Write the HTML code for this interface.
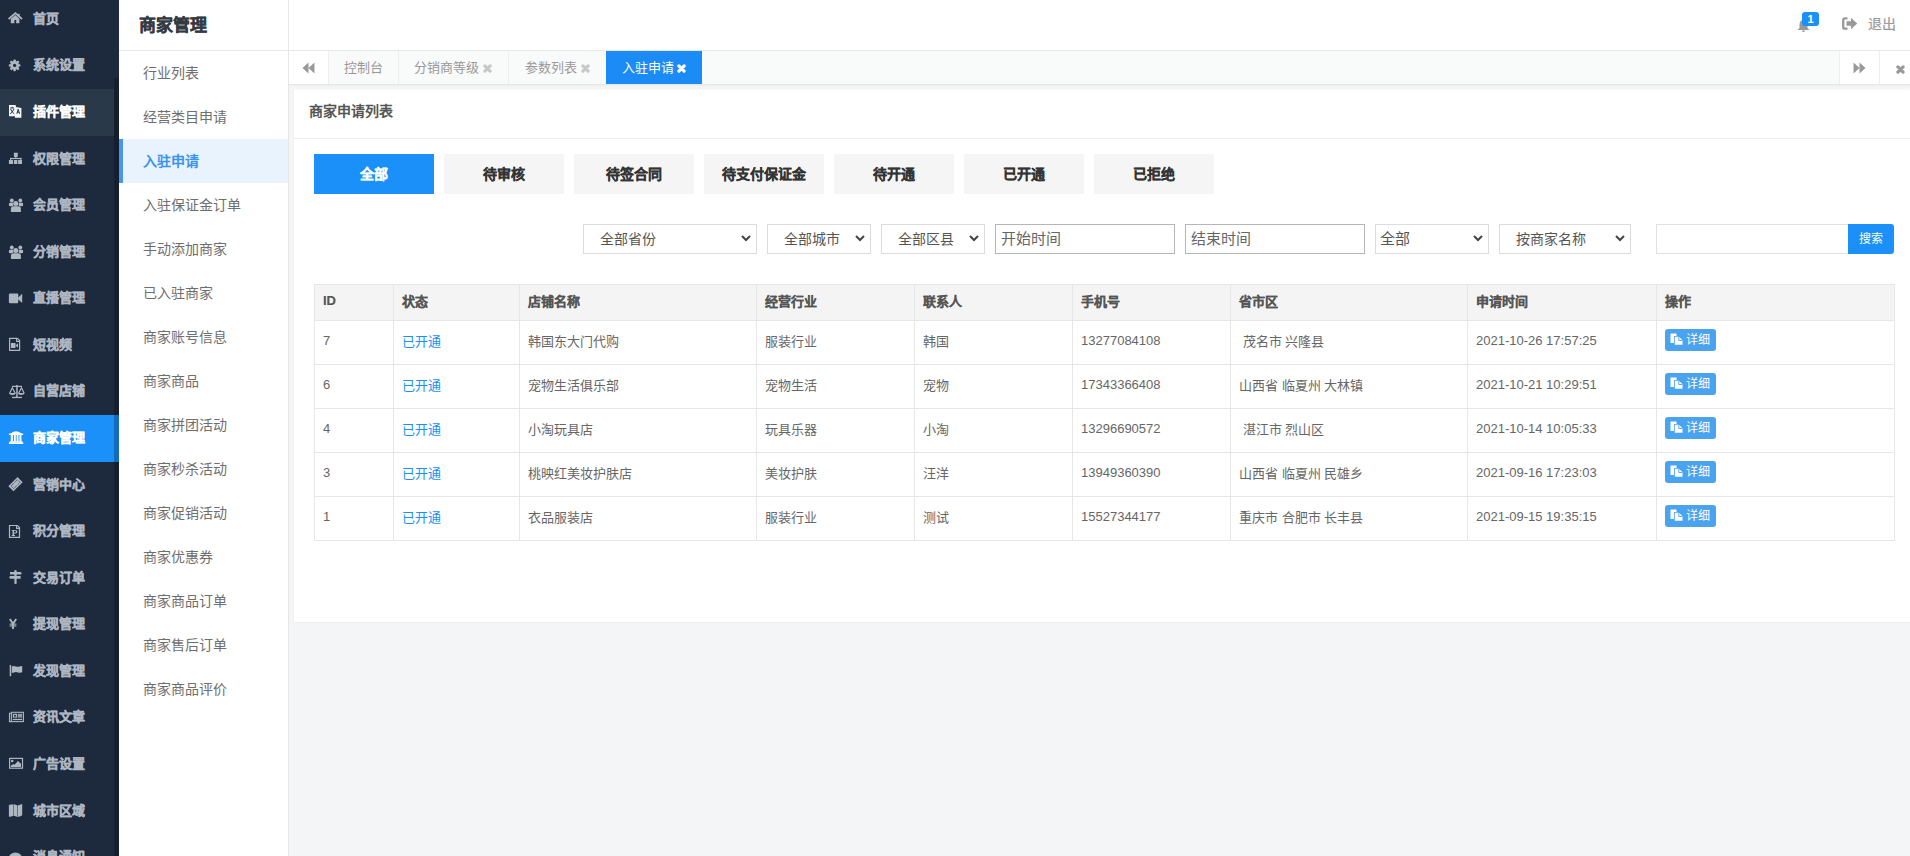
<!DOCTYPE html>
<html lang="zh-CN">
<head>
<meta charset="utf-8">
<style>
*{box-sizing:border-box;margin:0;padding:0}
html,body{width:1910px;height:856px;overflow:hidden}
body{font-family:"Liberation Sans",sans-serif;background:#f4f5f7;position:relative;color:#666}
.abs{position:absolute}
#side{left:0;top:0;width:119px;height:856px;background:#1d2a3e;overflow:hidden}
#side .strip{position:absolute;left:114px;top:78px;width:5px;height:800px;background:rgba(0,0,0,0.25)}
#side .it{position:absolute;left:0;width:114px;height:47px;font-size:13px;font-weight:bold;color:#aeb6c2;line-height:47px}
#side .it span{position:absolute;left:33px;top:0;line-height:45px;-webkit-text-stroke:0.3px currentColor}
#side .ic{position:absolute;left:5px;width:20px;height:20px;display:block}
#side .ic svg{display:block}
#side .hov{background:#2a3949;color:#fff}
#side .act{background:#1a90f8;color:#fff;width:119px}
#sub{left:119px;top:0;width:170px;height:856px;background:#fff;border-right:1px solid #e6e6e6}
#sub .ttl{position:absolute;left:20px;top:2px;height:50px;line-height:48px;font-size:17px;font-weight:bold;color:#333a42;-webkit-text-stroke:0.3px #333a42}
#sub .line{position:absolute;left:0;top:50px;width:169px;height:1px;background:#e8e8e8}
#sub .si{position:absolute;left:0;width:169px;height:44px;line-height:44px;font-size:14px;color:#6e6e6e;padding-left:24px}
#sub .si.on{background:#e9f3fd;color:#3b93ee;font-weight:bold;border-left:4px solid #4596ee;padding-left:20px}
#hdr{left:289px;top:0;width:1621px;height:51px;background:#fff;border-bottom:1px solid #e8e8e8}
#hdr .bell{position:absolute;left:1508px;top:18px}
#hdr .badge{position:absolute;left:1513px;top:12px;width:17px;height:14px;border-radius:3px;background:#1a90f8;color:#fff;font-size:11px;font-weight:bold;text-align:center;line-height:14px}
#hdr .signout{position:absolute;left:1553px;top:16px}
#hdr .logout{position:absolute;left:1579px;top:0;line-height:48px;font-size:14px;color:#999;-webkit-text-stroke:0.2px #999}
#tabs{left:289px;top:51px;width:1621px;height:34px;background:#f9fafa;border-bottom:1px solid #e6e6e6}
.tab{position:absolute;top:0;height:33px;line-height:33px;font-size:13px;color:#999;border-left:1px solid #eee;text-align:center;white-space:nowrap}
.tab svg{vertical-align:-1px}
.tab.on{background:#1b8cf5;color:#fff;border-left:none}
.tbtn{position:absolute;top:0;height:33px;background:#fff;display:flex;align-items:center;justify-content:center}
.tbtn.r1{left:1550px;width:40px;border-left:1px solid #eee}
.tbtn.r2{left:1590px;width:31px;border-left:1px solid #eee;justify-content:flex-start;padding-left:16px;padding-top:3px}
#gap{left:289px;top:85px;width:1621px;height:5px;background:linear-gradient(#eff0f0,#f7f8f8)}
#panel{left:294px;top:90px;width:1616px;height:532px;background:#fff;box-shadow:0 1px 1px rgba(0,0,0,0.03)}
.ptitle{position:absolute;left:15px;top:0;height:48px;line-height:42px;font-size:14px;font-weight:bold;color:#555}
.pline{position:absolute;left:0;top:48px;width:1616px;height:1px;background:#ececec}
.sbtn{position:absolute;top:64px;width:120px;height:40px;line-height:40px;text-align:center;font-size:14px;font-weight:bold;color:#333;background:#f5f5f5;-webkit-text-stroke:0.2px currentColor}
.sbtn.on{background:#1a90f8;color:#fff}
.sel{position:absolute;top:134px;height:30px;border:1px solid #dcdcdc;background:#fff;font-size:14px;color:#555}
.sel span{position:absolute;top:0;line-height:28px;white-space:nowrap}
.sel i{position:absolute;right:5px;top:10px;display:block;height:7px}
.sel i svg{display:block}
.sel.big{font-size:15px}
.inp{position:absolute;top:134px;height:30px;border:1px solid #b5b5b5;background:#fff;font-size:15px;color:#666}
.inp span{position:absolute;left:5px;top:0;line-height:28px}
.sinp{position:absolute;top:134px;height:30px;border:1px solid #e0e0e0;background:#fff}
.sbtn2{position:absolute;top:134px;width:46px;height:30px;line-height:30px;text-align:center;font-size:12px;color:#fff;background:#1a90f8;border-radius:0 3px 3px 0}
.tbl{position:absolute;left:20px;top:194px;border-collapse:collapse;table-layout:fixed;width:1580px}
.tbl td{border:1px solid #e6e6e6;padding:0 0 4px 8px;font-size:13px;color:#666;white-space:nowrap;overflow:hidden}
.tbl tr.th td{height:36px;padding-bottom:5px;background:#f4f4f4;font-weight:bold;color:#555;-webkit-text-stroke:0.15px #555}
.tbl tr.tr td{height:44px}
.tbl td.blue{color:#1a90f8}
.dbtn{display:inline-block;width:51px;height:22px;line-height:22px;border-radius:3px;background:#4aa3ef;color:#fff;font-size:12px;padding-left:5px;position:relative;top:-1px}
.dbtn svg{vertical-align:-1px}
.dbtn b{font-weight:normal;margin-left:3px}

</style>
</head>
<body>
<div id="side" class="abs"><div class="it" style="top:-4.14px"><span>首页</span></div><i class="ic" style="top:8px;color:#aeb6c2"><svg width="20" height="20" viewBox="0 0 20 20" ><path d="M3.6 11 L10.4 5.2 L17 11" fill="none" stroke="currentColor" stroke-width="1.7" stroke-linejoin="miter"/><rect x="13" y="5.8" width="1.6" height="3.2" fill="currentColor"/><path d="M5.8 10.8 L10.4 7 L14.4 10.8 L14.4 15.2 L11.2 15.2 L11.2 12 L9.4 12 L9.4 15.2 L5.8 15.2 Z" fill="currentColor"/></svg></i><div class="it" style="top:42.43px"><span>系统设置</span></div><i class="ic" style="top:55px;color:#aeb6c2"><svg width="20" height="20" viewBox="0 0 20 20" ><g fill="currentColor"><circle cx="9.6" cy="10.4" r="4.4"/><g id="t"><rect x="8.4" y="4.6" width="2.4" height="11.6" rx="0.6"/></g><rect x="8.4" y="4.6" width="2.4" height="11.6" rx="0.6" transform="rotate(45 9.6 10.4)"/><rect x="8.4" y="4.6" width="2.4" height="11.6" rx="0.6" transform="rotate(90 9.6 10.4)"/><rect x="8.4" y="4.6" width="2.4" height="11.6" rx="0.6" transform="rotate(135 9.6 10.4)"/></g><circle cx="9.6" cy="10.4" r="1.6" fill="#1d2a3e"/></svg></i><div class="it hov" style="top:89.00px"><span>插件管理</span></div><i class="ic" style="top:101px;color:#fff"><svg width="20" height="20" viewBox="0 0 20 20" ><path d="M4 4 L10.5 4 L11 6 L16.4 7 L16.4 16.8 L10 16.8 L9.5 15.2 L4 15.2 Z" fill="#f4f6f8"/><path d="M4.3 4.2 L10.2 4.2 L10.2 15 L4.3 15 Z" fill="#f4f6f8"/><g stroke="#2a3949" fill="none" stroke-width="1"><path d="M5.2 7 L9.2 7"/><path d="M7.2 5.8 L7.2 7"/><path d="M5.6 8 Q7 11.5 9.2 12.8"/><path d="M9 8 Q7.5 11.5 5.2 12.8"/><path d="M11.8 12.8 L13.2 8.2 L14.6 12.8"/><path d="M12.3 11.3 L14.1 11.3"/><path d="M10 15.6 L8.3 17"/></g></svg></i><div class="it" style="top:135.57px"><span>权限管理</span></div><i class="ic" style="top:148px;color:#aeb6c2"><svg width="20" height="20" viewBox="0 0 20 20" ><g fill="currentColor"><path d="M8.8 4.7 L12.9 4.7 L12.6 9.1 L9.1 9.1 Z"/><rect x="10.3" y="9" width="1" height="1.5"/><rect x="5.1" y="9.9" width="11.3" height="1.2"/><rect x="5.1" y="9.9" width="1.1" height="2.2"/><rect x="15.3" y="9.9" width="1.1" height="2.2"/><rect x="3.9" y="11.9" width="4.1" height="4.2" rx="0.4"/><rect x="8.9" y="11.9" width="3.5" height="4.2" rx="0.4"/><rect x="13.1" y="11.9" width="3.9" height="4.2" rx="0.4"/></g></svg></i><div class="it" style="top:182.14px"><span>会员管理</span></div><i class="ic" style="top:195px;color:#aeb6c2"><svg width="20" height="20" viewBox="0 0 20 20" ><g fill="currentColor"><circle cx="6.8" cy="5.5" r="1.9"/><circle cx="15.3" cy="5.5" r="1.9"/><rect x="3.9" y="7.8" width="4.4" height="3.4" rx="1.2"/><rect x="13.7" y="7.8" width="4.4" height="3.4" rx="1.2"/><circle cx="10.8" cy="8.4" r="2.5"/><path d="M5.9 17 L5.9 13.8 Q5.9 11.3 8.5 11.3 L13.3 11.3 Q15.9 11.3 15.9 13.8 L15.9 17 Z"/></g></svg></i><div class="it" style="top:228.71px"><span>分销管理</span></div><i class="ic" style="top:242px;color:#aeb6c2"><svg width="20" height="20" viewBox="0 0 20 20" ><g fill="currentColor"><circle cx="6.8" cy="5.5" r="1.9"/><circle cx="15.3" cy="5.5" r="1.9"/><rect x="3.9" y="7.8" width="4.4" height="3.4" rx="1.2"/><rect x="13.7" y="7.8" width="4.4" height="3.4" rx="1.2"/><circle cx="10.8" cy="8.4" r="2.5"/><path d="M5.9 17 L5.9 13.8 Q5.9 11.3 8.5 11.3 L13.3 11.3 Q15.9 11.3 15.9 13.8 L15.9 17 Z"/></g></svg></i><div class="it" style="top:275.28px"><span>直播管理</span></div><i class="ic" style="top:288px;color:#aeb6c2"><svg width="20" height="20" viewBox="0 0 20 20" ><g fill="currentColor"><rect x="3.9" y="5.6" width="9.4" height="9.6" rx="1.2"/><path d="M12.3 10.4 L17.2 5.8 L17.2 15 Z"/></g></svg></i><div class="it" style="top:321.85px"><span>短视频</span></div><i class="ic" style="top:333px;color:#aeb6c2"><svg width="20" height="20" viewBox="0 0 20 20" ><path d="M4.6 5.3 L12.4 5.3 L14.6 7.6 L14.6 17.3 L4.6 17.3 Z" fill="none" stroke="currentColor" stroke-width="1.2"/><path d="M11.6 5.3 L11.6 8.4 L14.6 8.4" fill="none" stroke="currentColor" stroke-width="1.1"/><g fill="currentColor"><rect x="5.9" y="10" width="4.6" height="5" rx="0.6"/><path d="M10.5 12.5 L13 10.2 L13 14.8 Z"/></g></svg></i><div class="it" style="top:368.42px"><span>自营店铺</span></div><i class="ic" style="top:380px;color:#aeb6c2"><svg width="20" height="20" viewBox="0 0 20 20" ><g fill="currentColor"><rect x="7" y="5.8" width="10" height="1.2"/><circle cx="11.9" cy="5.8" r="0.9"/><rect x="11.2" y="5.5" width="1.5" height="11.8"/><rect x="7" y="16.8" width="10" height="1.3"/></g><g fill="none" stroke="currentColor" stroke-width="1.2"><path d="M4.6 13.2 L7.3 7.8 L10.2 13.2"/><path d="M13.6 13.2 L16.5 7.8 L19.2 13.2"/></g><g fill="currentColor"><path d="M3.9 13 L10.9 13 Q10.5 15 7.4 15 Q4.3 15 3.9 13 Z"/><path d="M12.9 13 L19.6 13 Q19.2 15 16.2 15 Q13.3 15 12.9 13 Z"/></g></svg></i><div class="it act" style="top:414.99px"><span>商家管理</span></div><i class="ic" style="top:427px;color:#fff"><svg width="20" height="20" viewBox="0 0 20 20" ><g fill="currentColor"><path d="M3.9 7.6 L8 5 Q11 3.6 14 5 L18.2 7.6 Z"/><rect x="3.9" y="6.6" width="14.3" height="1.4"/><rect x="5.8" y="7.8" width="2.1" height="6.6"/><rect x="8.9" y="7.8" width="1.9" height="6.6"/><rect x="11.6" y="7.8" width="1.9" height="6.6"/><rect x="14.4" y="7.8" width="2" height="6.6"/><rect x="4.8" y="14.2" width="12.6" height="1.2"/><rect x="3.9" y="15.2" width="14.3" height="1.8"/></g></svg></i><div class="it" style="top:461.56px"><span>营销中心</span></div><i class="ic" style="top:473px;color:#aeb6c2"><svg width="20" height="20" viewBox="0 0 20 20" ><g transform="rotate(-45 10.5 11.2)"><rect x="4" y="7.6" width="13" height="7.2" fill="currentColor"/><rect x="6" y="9.3" width="9" height="3.8" fill="none" stroke="#1d2a3e" stroke-width="0.8" stroke-dasharray="1 0.8"/></g></svg></i><div class="it" style="top:508.13px"><span>积分管理</span></div><i class="ic" style="top:520px;color:#aeb6c2"><svg width="20" height="20" viewBox="0 0 20 20" ><path d="M4.5 5.5 L12.4 5.5 L14.5 7.6 L14.5 17.4 L4.5 17.4 Z" fill="none" stroke="currentColor" stroke-width="1.2"/><path d="M11.6 5.5 L11.6 8.4 L14.5 8.4" fill="none" stroke="currentColor" stroke-width="1.1"/><path d="M6.6 9.9 L10.6 9.9 Q12.4 9.9 12.4 11.7 Q12.4 13.4 10.6 13.4 L9.1 13.4 L9.1 15.1 L10 15.1 L10 16 L6.6 16 L6.6 15.1 L7.5 15.1 L7.5 10.8 L6.6 10.8 Z M9.1 10.8 L9.1 12.5 L10.4 12.5 Q11 12.5 11 11.65 Q11 10.8 10.4 10.8 Z" fill="currentColor" fill-rule="evenodd"/></svg></i><div class="it" style="top:554.70px"><span>交易订单</span></div><i class="ic" style="top:566px;color:#aeb6c2"><svg width="20" height="20" viewBox="0 0 20 20" ><g fill="currentColor"><path d="M5 6 L15.8 6 L16.8 7.2 L15.8 8.5 L5 8.5 Z"/><path d="M5.1 10 L15.6 10 L15.6 12.7 L5.1 12.7 L4.1 11.35 Z"/><rect x="9.4" y="4.6" width="2.2" height="13.3"/><circle cx="10.5" cy="5" r="0.9"/></g></svg></i><div class="it" style="top:601.27px"><span>提现管理</span></div><i class="ic" style="top:613px;color:#aeb6c2"><svg width="20" height="20" viewBox="0 0 20 20" ><g fill="none" stroke="currentColor" stroke-width="1.9"><path d="M4.8 6 L8 10.8 L11.2 6"/><path d="M8 10.5 L8 16"/></g><g fill="currentColor"><rect x="4.6" y="10.6" width="6.8" height="1.1"/><rect x="4.6" y="12.4" width="6.8" height="1.1"/></g></svg></i><div class="it" style="top:647.84px"><span>发现管理</span></div><i class="ic" style="top:660px;color:#aeb6c2"><svg width="20" height="20" viewBox="0 0 20 20" ><g fill="currentColor"><rect x="4.7" y="5" width="1.5" height="11.2" rx="0.5"/><path d="M6.8 6.4 Q9 5.7 11 6.4 Q13 7 14.5 6.4 L17.2 5.9 L17.2 12.3 Q15 13 13 12.4 Q11 11.8 9 12.4 L6.8 12.9 Z"/></g></svg></i><div class="it" style="top:694.41px"><span>资讯文章</span></div><i class="ic" style="top:706px;color:#aeb6c2"><svg width="20" height="20" viewBox="0 0 20 20" ><g fill="none" stroke="currentColor" stroke-width="1.1"><rect x="6.4" y="6.3" width="12" height="9.3"/><path d="M6.4 7.3 L4.5 7.3 L4.5 15.6 L6.4 15.6"/></g><g fill="currentColor"><rect x="7.8" y="7.8" width="4.3" height="3.8"/><rect x="12.8" y="7.8" width="4.3" height="3.8" opacity="0.8"/><rect x="7.8" y="12.8" width="9.3" height="1.3"/></g><rect x="9" y="9" width="1.8" height="1.6" fill="#1d2a3e"/></svg></i><div class="it" style="top:740.98px"><span>广告设置</span></div><i class="ic" style="top:752px;color:#aeb6c2"><svg width="20" height="20" viewBox="0 0 20 20" ><rect x="4.6" y="6.4" width="12.9" height="9.8" fill="none" stroke="currentColor" stroke-width="1.2"/><g fill="currentColor"><circle cx="7.2" cy="9" r="1.3"/><path d="M5.8 15 L5.8 13.8 L8.2 12 L9.5 12.8 L12.9 8.9 L16 11.8 L16 15 Z"/></g></svg></i><div class="it" style="top:787.55px"><span>城市区域</span></div><i class="ic" style="top:799px;color:#aeb6c2"><svg width="20" height="20" viewBox="0 0 20 20" ><g fill="currentColor"><path d="M3.9 6 Q5.5 5 7.4 5.6 L8.5 5.2 L8.5 16.8 Q6 17.8 3.9 17.7 Z"/><path d="M8.9 5.2 Q10.5 5.5 12.4 6.5 L12.4 18 Q10.5 17.2 8.9 16.8 Z"/><path d="M12.8 6.5 Q15 5.5 17.2 5 L17.2 16.3 Q15.6 17.5 12.8 18 Z"/></g></svg></i><div class="it" style="top:834.12px"><span>消息通知</span></div><i class="ic" style="top:846px;color:#aeb6c2"><svg width="20" height="20" viewBox="0 0 20 20" ><g fill="currentColor"><ellipse cx="10.4" cy="13" rx="6.8" ry="6.6"/></g><g fill="#1d2a3e"><circle cx="7.5" cy="13" r="0.8"/><circle cx="10.4" cy="13" r="0.8"/><circle cx="13.3" cy="13" r="0.8"/></g></svg></i><div class="strip"></div></div>
<div id="sub" class="abs"><div class="ttl">商家管理</div><div class="line"></div><div class="si" style="top:51px">行业列表</div><div class="si" style="top:95px">经营类目申请</div><div class="si on" style="top:139px">入驻申请</div><div class="si" style="top:183px">入驻保证金订单</div><div class="si" style="top:227px">手动添加商家</div><div class="si" style="top:271px">已入驻商家</div><div class="si" style="top:315px">商家账号信息</div><div class="si" style="top:359px">商家商品</div><div class="si" style="top:403px">商家拼团活动</div><div class="si" style="top:447px">商家秒杀活动</div><div class="si" style="top:491px">商家促销活动</div><div class="si" style="top:535px">商家优惠券</div><div class="si" style="top:579px">商家商品订单</div><div class="si" style="top:623px">商家售后订单</div><div class="si" style="top:667px">商家商品评价</div></div>
<div id="hdr" class="abs"><div class="bell"><svg width="13" height="13" viewBox="0 0 13 13"><path d="M6.5 1 Q10.5 1 10.5 6 L10.5 9 L12.5 11 L0.5 11 L2.5 9 L2.5 6 Q2.5 1 6.5 1 Z M5 11.5 L8 11.5 Q8 13 6.5 13 Q5 13 5 11.5Z" fill="#999"/></svg></div><div class="badge">1</div><div class="signout"><svg width="16" height="13" viewBox="0 0 16 13"><path d="M5.5 1.3 L3 1.3 Q1.2 1.3 1.2 3.1 L1.2 9.9 Q1.2 11.7 3 11.7 L5.5 11.7" stroke="#999" stroke-width="2.3" fill="none"/><path d="M4.5 4.3 L9 4.3 L9 0.8 L15.2 6.5 L9 12.2 L9 8.7 L4.5 8.7 Z" fill="#999"/></svg></div><div class="logout">退出</div></div>
<div id="tabs" class="abs"><div class="tbtn" style="left:0;width:39px"><svg width="13" height="12" viewBox="0 0 13 12"><path d="M6.5 0.5 L0.5 6 L6.5 11.5 Z M12.5 0.5 L6.5 6 L12.5 11.5 Z" fill="#999"/></svg></div><div class="tab" style="left:39px;width:70px">控制台</div><div class="tab" style="left:109px;width:109px">分销商等级 <svg width="9" height="9" viewBox="0 0 9 9"><path d="M1.9 1.9 L7.1 7.1 M7.1 1.9 L1.9 7.1" stroke="#c8c8c8" stroke-width="3.2" stroke-linecap="round"/></svg></div><div class="tab" style="left:219px;width:98px">参数列表 <svg width="9" height="9" viewBox="0 0 9 9"><path d="M1.9 1.9 L7.1 7.1 M7.1 1.9 L1.9 7.1" stroke="#c8c8c8" stroke-width="3.2" stroke-linecap="round"/></svg></div><div class="tab on" style="left:317px;width:96px">入驻申请 <svg width="9" height="9" viewBox="0 0 9 9"><path d="M1.9 1.9 L7.1 7.1 M7.1 1.9 L1.9 7.1" stroke="#fff" stroke-width="3.2" stroke-linecap="round"/></svg></div><div class="tbtn r1"><svg width="13" height="12" viewBox="0 0 13 12"><path d="M0.5 0.5 L6.5 6 L0.5 11.5 Z M6.5 0.5 L12.5 6 L6.5 11.5 Z" fill="#999"/></svg></div><div class="tbtn r2"><svg width="9" height="9" viewBox="0 0 9 9"><path d="M1.9 1.9 L7.1 7.1 M7.1 1.9 L1.9 7.1" stroke="#999" stroke-width="3.2" stroke-linecap="round"/></svg></div></div>
<div id="gap" class="abs"></div>
<div id="panel" class="abs"><div class="ptitle">商家申请列表</div><div class="pline"></div><div class="sbtn on" style="left:20px">全部</div><div class="sbtn" style="left:150px">待审核</div><div class="sbtn" style="left:280px">待签合同</div><div class="sbtn" style="left:410px">待支付保证金</div><div class="sbtn" style="left:540px">待开通</div><div class="sbtn" style="left:670px">已开通</div><div class="sbtn" style="left:800px">已拒绝</div><div class="sel" style="left:289px;width:174px"><span style="left:16px">全部省份</span><i><svg width="10" height="7" viewBox="0 0 10 7"><path d="M1 1 L5 5 L9 1" stroke="#444" stroke-width="2" fill="none"/></svg></i></div><div class="sel" style="left:473px;width:104px"><span style="left:16px">全部城市</span><i><svg width="10" height="7" viewBox="0 0 10 7"><path d="M1 1 L5 5 L9 1" stroke="#444" stroke-width="2" fill="none"/></svg></i></div><div class="sel" style="left:587px;width:104px"><span style="left:16px">全部区县</span><i><svg width="10" height="7" viewBox="0 0 10 7"><path d="M1 1 L5 5 L9 1" stroke="#444" stroke-width="2" fill="none"/></svg></i></div><div class="inp" style="left:701px;width:180px"><span>开始时间</span></div><div class="inp" style="left:891px;width:180px"><span>结束时间</span></div><div class="sel big" style="left:1081px;width:114px"><span style="left:4px">全部</span><i><svg width="10" height="7" viewBox="0 0 10 7"><path d="M1 1 L5 5 L9 1" stroke="#444" stroke-width="2" fill="none"/></svg></i></div><div class="sel" style="left:1205px;width:132px"><span style="left:16px">按商家名称</span><i><svg width="10" height="7" viewBox="0 0 10 7"><path d="M1 1 L5 5 L9 1" stroke="#444" stroke-width="2" fill="none"/></svg></i></div><div class="sinp" style="left:1362px;width:193px"></div><div class="sbtn2" style="left:1554px">搜索</div><table class="tbl"><colgroup><col style="width:79px"><col style="width:126px"><col style="width:237px"><col style="width:158px"><col style="width:158px"><col style="width:158px"><col style="width:237px"><col style="width:189px"><col style="width:238px"></colgroup><tr class="th"><td>ID</td><td>状态</td><td>店铺名称</td><td>经营行业</td><td>联系人</td><td>手机号</td><td>省市区</td><td>申请时间</td><td>操作</td></tr><tr class="tr"><td>7</td><td class="blue">已开通</td><td>韩国东大门代购</td><td>服装行业</td><td>韩国</td><td>13277084108</td><td>&nbsp;茂名市 兴隆县</td><td>2021-10-26 17:57:25</td><td><span class="dbtn"><svg width="13" height="12" viewBox="0 0 13 12"><path d="M0.5 0.5 L6.5 0.5 L6.5 3 L4 3 L4 10 L0.5 10 Z" fill="#fff"/><path d="M4.8 3.8 L9 3.8 L12.5 7.3 L12.5 11.8 L4.8 11.8 Z" fill="#fff"/><path d="M8.8 3.8 L8.8 7.5 L12.5 7.5" fill="none" stroke="#4aa3ef" stroke-width="0.9"/></svg><b>详细</b></span></td></tr><tr class="tr"><td>6</td><td class="blue">已开通</td><td>宠物生活俱乐部</td><td>宠物生活</td><td>宠物</td><td>17343366408</td><td>山西省 临夏州 大林镇</td><td>2021-10-21 10:29:51</td><td><span class="dbtn"><svg width="13" height="12" viewBox="0 0 13 12"><path d="M0.5 0.5 L6.5 0.5 L6.5 3 L4 3 L4 10 L0.5 10 Z" fill="#fff"/><path d="M4.8 3.8 L9 3.8 L12.5 7.3 L12.5 11.8 L4.8 11.8 Z" fill="#fff"/><path d="M8.8 3.8 L8.8 7.5 L12.5 7.5" fill="none" stroke="#4aa3ef" stroke-width="0.9"/></svg><b>详细</b></span></td></tr><tr class="tr"><td>4</td><td class="blue">已开通</td><td>小淘玩具店</td><td>玩具乐器</td><td>小淘</td><td>13296690572</td><td>&nbsp;湛江市 烈山区</td><td>2021-10-14 10:05:33</td><td><span class="dbtn"><svg width="13" height="12" viewBox="0 0 13 12"><path d="M0.5 0.5 L6.5 0.5 L6.5 3 L4 3 L4 10 L0.5 10 Z" fill="#fff"/><path d="M4.8 3.8 L9 3.8 L12.5 7.3 L12.5 11.8 L4.8 11.8 Z" fill="#fff"/><path d="M8.8 3.8 L8.8 7.5 L12.5 7.5" fill="none" stroke="#4aa3ef" stroke-width="0.9"/></svg><b>详细</b></span></td></tr><tr class="tr"><td>3</td><td class="blue">已开通</td><td>桃映红美妆护肤店</td><td>美妆护肤</td><td>汪洋</td><td>13949360390</td><td>山西省 临夏州 民雄乡</td><td>2021-09-16 17:23:03</td><td><span class="dbtn"><svg width="13" height="12" viewBox="0 0 13 12"><path d="M0.5 0.5 L6.5 0.5 L6.5 3 L4 3 L4 10 L0.5 10 Z" fill="#fff"/><path d="M4.8 3.8 L9 3.8 L12.5 7.3 L12.5 11.8 L4.8 11.8 Z" fill="#fff"/><path d="M8.8 3.8 L8.8 7.5 L12.5 7.5" fill="none" stroke="#4aa3ef" stroke-width="0.9"/></svg><b>详细</b></span></td></tr><tr class="tr"><td>1</td><td class="blue">已开通</td><td>衣品服装店</td><td>服装行业</td><td>测试</td><td>15527344177</td><td>重庆市 合肥市 长丰县</td><td>2021-09-15 19:35:15</td><td><span class="dbtn"><svg width="13" height="12" viewBox="0 0 13 12"><path d="M0.5 0.5 L6.5 0.5 L6.5 3 L4 3 L4 10 L0.5 10 Z" fill="#fff"/><path d="M4.8 3.8 L9 3.8 L12.5 7.3 L12.5 11.8 L4.8 11.8 Z" fill="#fff"/><path d="M8.8 3.8 L8.8 7.5 L12.5 7.5" fill="none" stroke="#4aa3ef" stroke-width="0.9"/></svg><b>详细</b></span></td></tr></table></div>
</body>
</html>
